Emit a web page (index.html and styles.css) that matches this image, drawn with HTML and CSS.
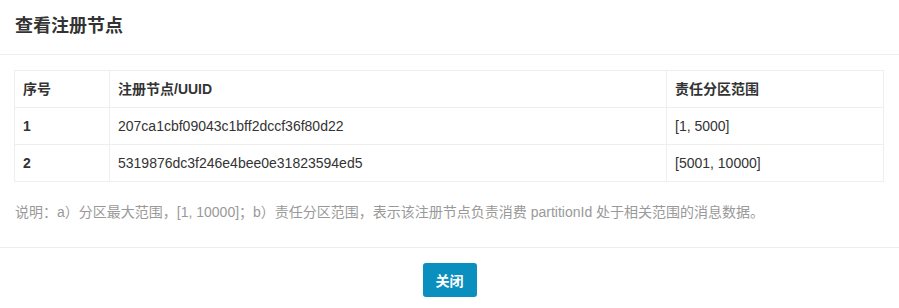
FILE: index.html
```html
<!DOCTYPE html>
<html lang="zh-CN">
<head>
  <meta charset="UTF-8" />
  <title>查看注册节点</title>
  <link rel="stylesheet" href="styles.css">
</head>
<body>
  <div class="modal">
    <div class="modal-header">
      <h4 class="modal-title">查看注册节点</h4>
    </div>

    <div class="modal-body">
      <table class="node-table">
        <thead>
          <tr>
            <th class="col-no">序号</th>
            <th class="col-uuid">注册节点/UUID</th>
            <th>责任分区范围</th>
          </tr>
        </thead>
        <tbody>
          <tr>
            <td class="num">1</td>
            <td>207ca1cbf09043c1bff2dccf36f80d22</td>
            <td>[1, 5000]</td>
          </tr>
          <tr>
            <td class="num">2</td>
            <td>5319876dc3f246e4bee0e31823594ed5</td>
            <td>[5001, 10000]</td>
          </tr>
        </tbody>
      </table>

      <p class="note">说明：a）分区最大范围，[1, 10000]；b）责任分区范围，表示该注册节点负责消费 partitionId 处于相关范围的消息数据。</p>
    </div>

    <div class="modal-footer">
      <button class="btn-close">关闭</button>
    </div>
  </div>
</body>
</html>
```

FILE: styles.css
```css
body {
  margin: 0;
  font-family: "Liberation Sans", Arial, "Noto Sans CJK SC", sans-serif;
  font-size: 14px;
  color: #333;
  background: #fff;
}

.modal {
  width: 899px;
}

.modal-header {
  height: 54px;
  padding: 0 15px;
  display: flex;
  align-items: center;
  border-bottom: 1px solid #eee;
}

.modal-title {
  margin: 0;
  font-size: 18px;
  font-weight: 600;
  line-height: 25px;
  padding-bottom: 1px;
}

.modal-body {
  padding: 15px 15px 15px 14px;
}

.node-table {
  width: 870px;
  border-collapse: collapse;
  border: 1px solid #eee;
  margin-bottom: 20px;
}

.node-table th,
.node-table td {
  border: 1px solid #eee;
  padding: 8px 8px;
  line-height: 20px;
  text-align: left;
}

.node-table th {
  font-weight: bold;
}

.node-table .col-no {
  width: 78px;
}

.node-table .col-uuid {
  width: 540px;
}

.node-table td.num {
  font-weight: bold;
}

.note {
  margin: 0 0 10px 1px;
  line-height: 20px;
  color: #999;
}

.modal-footer {
  border-top: 1px solid #eee;
  padding: 15px;
  display: flex;
  justify-content: center;
}

.btn-close {
  width: 54px;
  height: 34px;
  border: none;
  border-radius: 3px;
  background: #0b8fbe;
  color: #fff;
  font-family: inherit;
  font-size: 14px;
  font-weight: 600;
  cursor: pointer;
}
```
